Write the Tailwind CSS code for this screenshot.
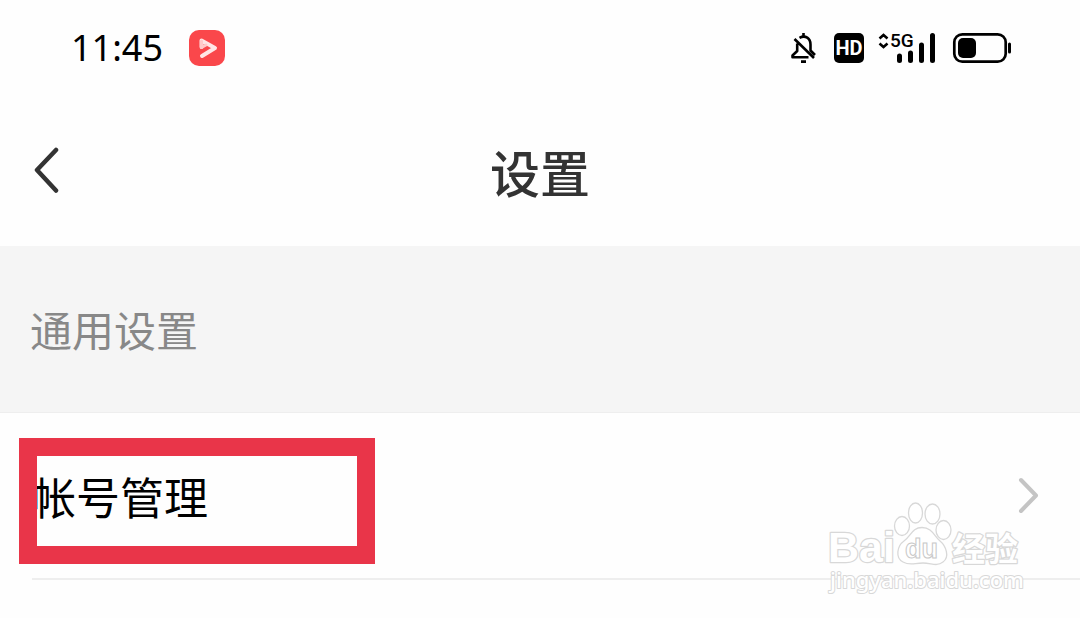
<!DOCTYPE html>
<html lang="zh-CN">
<head>
<meta charset="utf-8">
<meta name="viewport" content="width=device-width, initial-scale=1">
<title>设置</title>
<script src="https://cdn.jsdelivr.net/npm/@tailwindcss/browser@4"></script>
</head>
<body class="relative min-h-screen bg-[#fefefe] text-black font-['Noto_Sans_CJK_SC',sans-serif]">
<div class="flex h-24 items-center justify-between pl-[71px] pr-[68px]">
  <div class="flex items-center gap-[26px]">
    <time class="text-4xl font-['Noto_Sans',sans-serif]">11:45</time>
    <svg class="size-9" viewBox="0 0 36 36" aria-hidden="true">
      <rect width="36" height="36" rx="10" fill="#fa474b"/>
      <path d="M12.500 17V10.500L26 18L13 26" fill="none" stroke="#ffe6e6" stroke-width="4" stroke-linecap="round" stroke-linejoin="round"/>
      <path d="M12.500 11V17.500L17 15" fill="none" stroke="#ffcaca" stroke-width="3" stroke-linecap="round" stroke-linejoin="round"/>
    </svg>
  </div>
  <svg class="h-[34px] w-[224px]" viewBox="788 31 224 34" aria-label="静音 HD 5G 电池">
    <g fill="none" stroke="#000" stroke-width="2.6">
      <path d="M794.500 39L814 58M797.200 43.500V51L792.500 55.500V57.200H808.500M799.500 37.800C805.500 34.500 810.500 38.500 810.500 44.500V50.500L815 55" stroke-linejoin="round"/>
      <path d="M803.500 33V36M801 61.600H806"/>
    </g>
    <rect x="834" y="33" width="30" height="30" rx="5"/>
    <text x="849" y="55" text-anchor="middle" font-family="Liberation Sans Narrow, Roboto" font-weight="700" font-size="20" fill="#fff">HD</text>
    <path d="M879.500 38.500L883.500 35L887.500 38.500M879.500 43.500L883.500 47L887.500 43.500" fill="none" stroke="#000" stroke-width="2.600"/>
    <text x="890" y="47" font-family="Roboto" font-weight="500" font-size="19">5G</text>
    <path d="M899.500 56V60.500M910.500 53V60.500M921.500 45V60.500M932.500 35.500V60.500" fill="none" stroke="#000" stroke-width="5" stroke-linecap="round"/>
    <rect x="954.300" y="34.300" width="51.400" height="27.400" rx="8" fill="none" stroke="#000" stroke-width="2.700"/>
    <rect x="958" y="38" width="18" height="20" rx="5"/>
    <path d="M1009.500 44V52" stroke="#000" stroke-width="3" stroke-linecap="round"/>
  </svg>
</div>
<header class="grid h-[150px] grid-cols-[1fr_auto_1fr] items-center pl-8">
  <button type="button" class="justify-self-start" aria-label="返回">
    <svg class="h-12 w-8" viewBox="0 0 32 48" fill="none" stroke="#333" stroke-width="4.500" stroke-linecap="round" stroke-linejoin="round" aria-hidden="true"><path d="M24 3L5 23L24 43.500"/></svg>
  </button>
  <h1 class="pr-8 text-[50px] leading-[72px] font-medium text-[#333]">设置</h1>
</header>
<main>
  <h2 class="flex h-[167px] items-center border-b border-[#eee] bg-[#f5f5f5] pl-[30px] text-[42px] leading-[60px] text-[#888]">通用设置</h2>
  <div class="pl-8">
    <a href="#account" class="flex h-[167px] items-center justify-between border-b-2 border-[#eee] pr-10">
      <span class="text-[44px] leading-[64px]">帐号管理</span>
      <svg class="h-10 w-6" viewBox="0 0 24 40" fill="none" stroke="#c4c4c4" stroke-width="4" stroke-linecap="round" stroke-linejoin="round" aria-hidden="true"><path d="M5 4L20 19.500L5 35"/></svg>
    </a>
  </div>
</main>
<div class="pointer-events-none absolute top-[438px] left-[19px] h-[126px] w-[356px] border-[18px] border-[#e93549]"></div>
<svg class="pointer-events-none absolute top-[498px] right-[52px] h-[100px] w-[204px]" viewBox="824 498 204 100" fill="#fff" stroke="#d8d8d8" stroke-width="1.300" aria-label="Baidu 经验">
  <g paint-order="stroke" stroke-width="2.500" stroke-linejoin="round">
    <text x="828" y="562" font-family="Liberation Sans" font-weight="700" font-size="43">Bai</text>
    <text x="952" y="561" font-family="Noto Sans CJK SC" font-weight="700" font-size="33">经验</text>
    <text x="830" y="588" font-family="Noto Sans" font-weight="500" font-size="22" stroke-width="2">jingyan.baidu.com</text>
  </g>
  <ellipse cx="902" cy="526" rx="7.500" ry="9.500"/><ellipse cx="915.500" cy="513" rx="7" ry="10"/><ellipse cx="932.500" cy="514" rx="7.500" ry="10"/><ellipse cx="943.500" cy="530" rx="7.500" ry="9.500"/>
  <path d="M922 527.500C912 527.500 911 536 904 541C897 546 895 558 903 562C910 566 914 563 923 563C932 563 936 567 943 562C950 557 946 546 940 541C934 536 932 527.500 922 527.500Z"/>
  <text x="905" y="558" font-family="Liberation Sans" font-weight="700" font-size="27" stroke="#c8c8c8" stroke-width="1">du</text>
</svg>
</body>
</html>
